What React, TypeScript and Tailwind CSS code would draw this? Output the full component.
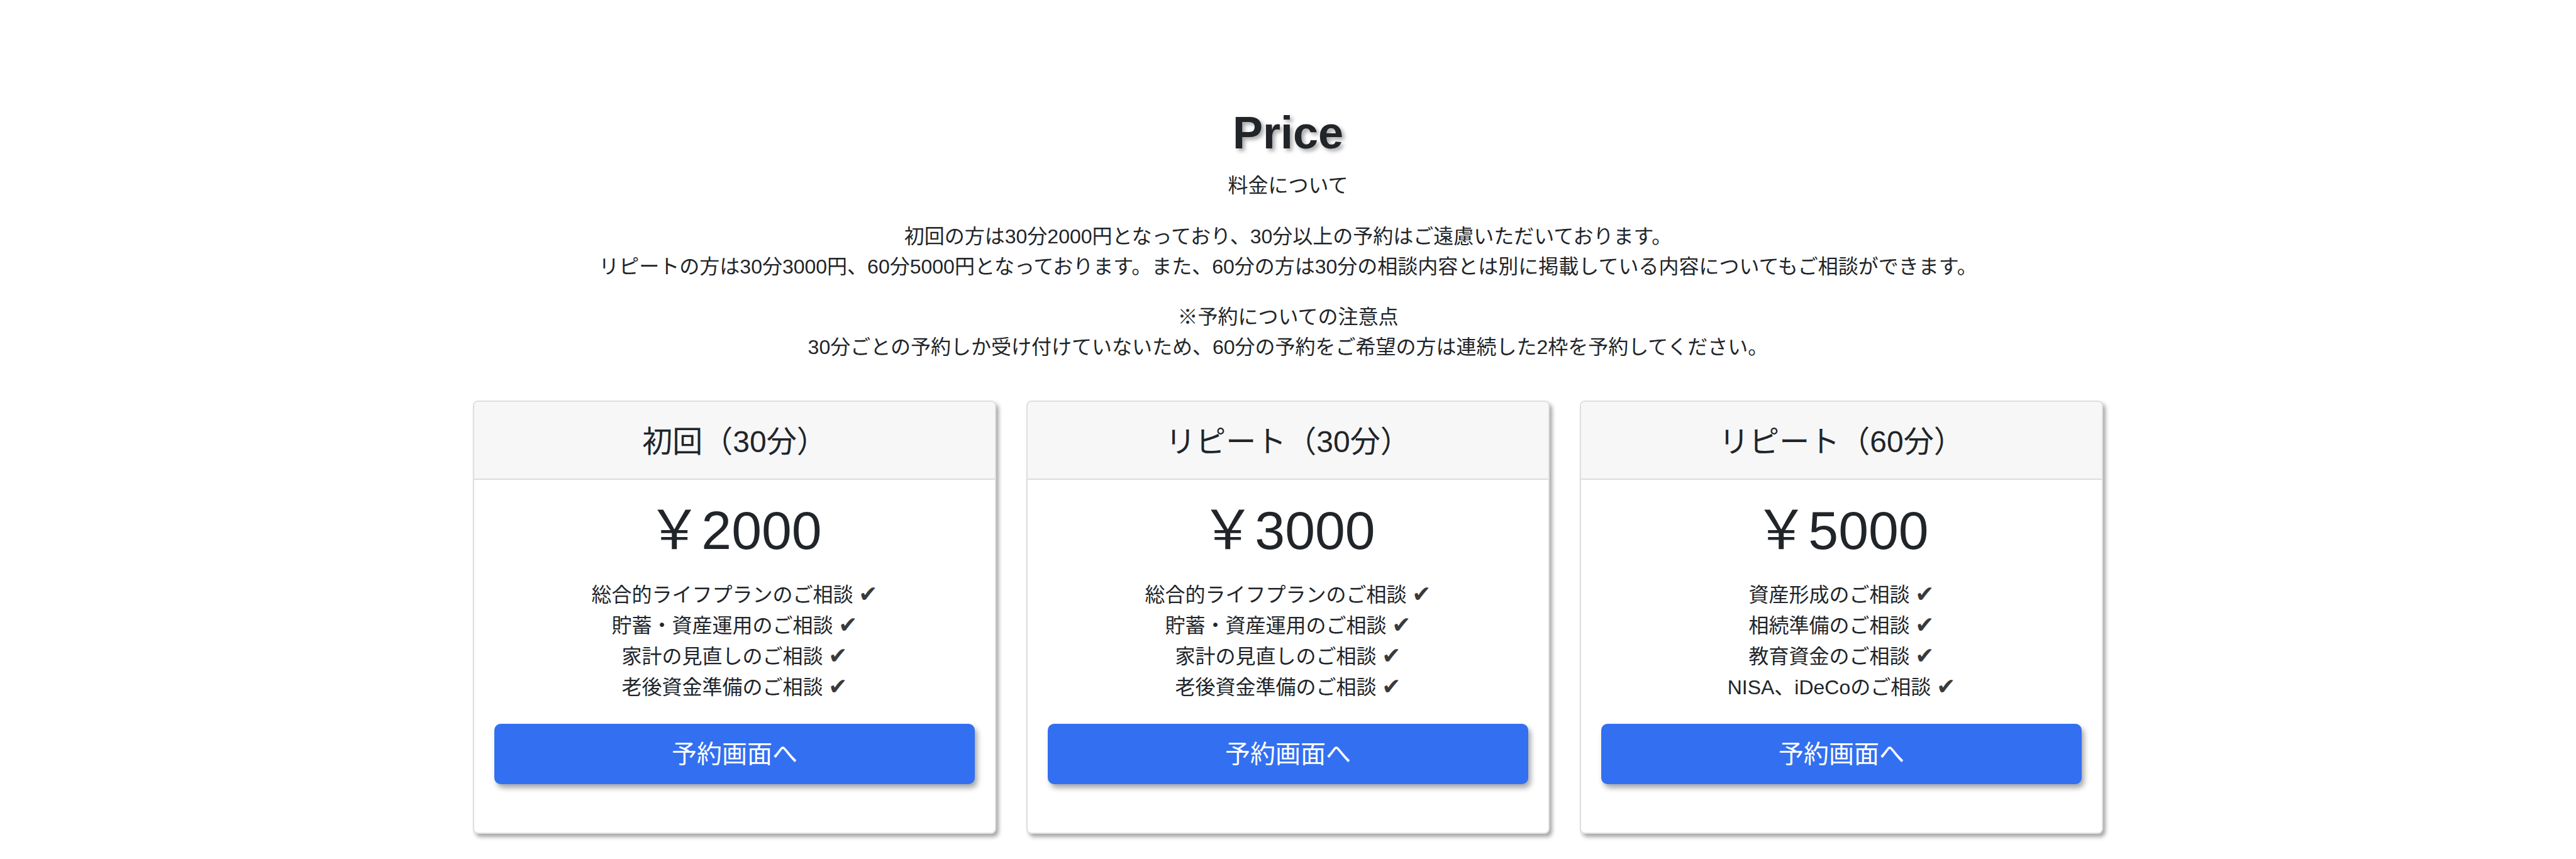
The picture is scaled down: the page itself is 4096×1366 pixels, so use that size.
import React from "react";

const FONT = '"Liberation Sans", "Noto Sans CJK JP", sans-serif';

type Plan = { title: string; price: string; items: string[] };

const plans: Plan[] = [
  {
    title: "初回（30分）",
    price: "2000",
    items: [
      "総合的ライフプランのご相談",
      "貯蓄・資産運用のご相談",
      "家計の見直しのご相談",
      "老後資金準備のご相談",
    ],
  },
  {
    title: "リピート（30分）",
    price: "3000",
    items: [
      "総合的ライフプランのご相談",
      "貯蓄・資産運用のご相談",
      "家計の見直しのご相談",
      "老後資金準備のご相談",
    ],
  },
  {
    title: "リピート（60分）",
    price: "5000",
    items: [
      "資産形成のご相談",
      "相続準備のご相談",
      "教育資金のご相談",
      "NISA、iDeCoのご相談",
    ],
  },
];

function Card({ plan }: { plan: Plan }) {
  return (
    <div className="rounded-[8px] border-2 border-[#dfdfdf] bg-white shadow-[4px_5px_6px_rgba(0,0,0,0.35)] overflow-hidden">
      <div className="bg-[#f7f7f7] border-b-2 border-[#dcdcdc] px-[40px] pt-[35px] pb-[29px]">
        <h4 className="text-[48px] leading-[1.2] font-normal text-center">{plan.title}</h4>
      </div>
      <div className="px-[32px] pt-[32px] pb-[77px] flex flex-col items-center">
        <h1 className="text-[86px] leading-[96px] font-normal text-center">
          <span>￥</span>
          {plan.price}
        </h1>
        <ul className="mt-[30px] text-[32px] leading-[48px] text-center">
          {plan.items.map((it) => (
            <li key={it}>
              {it}{" "}
              <span
                className="text-[#3a3a3a] text-[36px] leading-[48px] font-bold"
                style={{ fontFamily: '"DejaVu Sans", sans-serif' }}
              >
                ✔
              </span>
            </li>
          ))}
        </ul>
        <button className="mt-[34px] w-full h-[96px] rounded-[10px] bg-[#3370f1] text-white text-[40px] leading-[60px] shadow-[4px_6px_8px_rgba(0,0,0,0.35)]">
          予約画面へ
        </button>
      </div>
    </div>
  );
}

export default function App() {
  return (
    <div className="min-h-screen bg-white text-[#212529]" style={{ fontFamily: FONT }}>
      <section className="pt-[168px] flex flex-col items-center">
        <h2
          className="text-[72px] leading-[1.2] font-bold"
          style={{ textShadow: "4px 4px 6px rgba(0,0,0,0.35)" }}
        >
          Price
        </h2>
        <p className="mt-[17px] text-[32px] leading-[48px]">料金について</p>
        <div className="mt-[33px] text-center text-[32px] leading-[48px]">
          <p>
            初回の方は30分2000円となっており、30分以上の予約はご遠慮いただいております。
            <br />
            リピートの方は30分3000円、60分5000円となっております。また、60分の方は30分の相談内容とは別に掲載している内容についてもご相談ができます。
          </p>
          <p className="mt-[32px]">
            ※予約についての注意点
            <br />
            30分ごとの予約しか受け付けていないため、60分の予約をご希望の方は連続した2枠を予約してください。
          </p>
        </div>
        <div className="mt-[61px] w-[2592px] grid grid-cols-3 gap-[48px]">
          {plans.map((p) => (
            <Card key={p.title} plan={p} />
          ))}
        </div>
      </section>
    </div>
  );
}
